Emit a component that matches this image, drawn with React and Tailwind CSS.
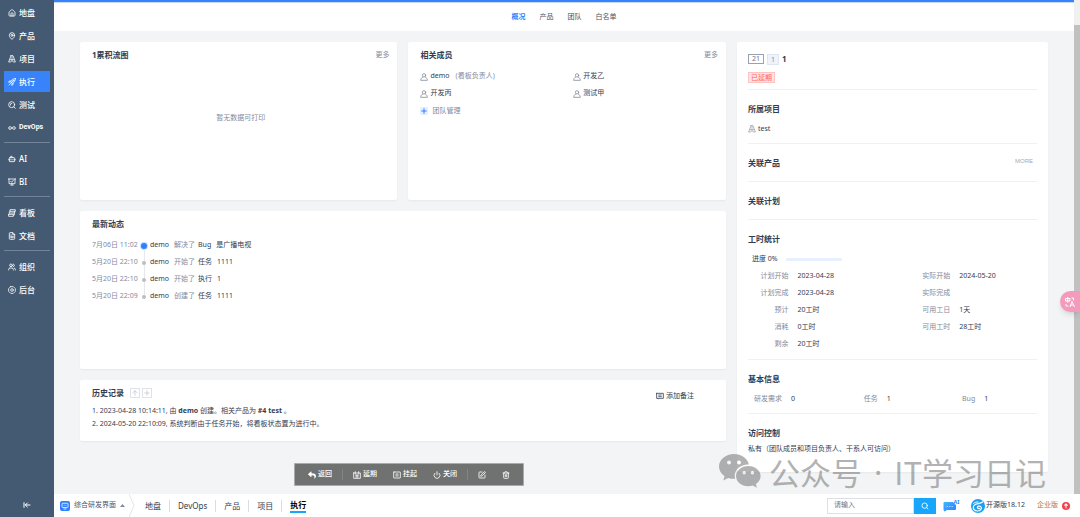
import React from 'react'
import {
    House,
    MapPin,
    Infinity as InfinityIcon,
    Bot,
    FileText,
    Users,
    ArrowLeftToLine,
    Plus,
    ArrowUp,
    Power,
    SquarePen,
    Trash2,
    Search
} from 'lucide-react'
import { FaReply } from 'react-icons/fa'

// Shared wrapper for the small line icons
const LineIcon = ({ className = '', children }) => (
    <svg
        viewBox="0 0 24 24"
        fill="none"
        stroke="currentColor"
        strokeWidth="2.4"
        strokeLinecap="round"
        strokeLinejoin="round"
        className={className}
        aria-hidden="true"
    >
        {children}
    </svg>
)

const ProjectIcon = ({ className }) => (
    <LineIcon className={className}>
        <path d="M9 2h6l7 19h-6l-4-5-4 5H2L9 2z" />
        <path d="M12 5v3M12 11v2M6 14h12" />
    </LineIcon>
)

const RocketIcon = ({ className }) => (
    <LineIcon className={className}>
        <path d="M22 2c-7 0-11 3-14 9l5 5c6-3 9-7 9-14zM14 10L3 21M9 9L4 9l-2 4 5-1M15 15v5l-4 2 1-5" />
        <circle cx="16" cy="8" r="1.500" />
    </LineIcon>
)

const TestIcon = ({ className }) => (
    <LineIcon className={className}>
        <circle cx="11" cy="11" r="9" />
        <path d="M18 18l4 4M7 12a4 4 0 0 1 4-5" />
    </LineIcon>
)

const BiIcon = ({ className }) => (
    <LineIcon className={className}>
        <path d="M1 3h22M3 3v14h18V3M8 21h8M12 17v4M8 10l3 3 5-6" />
    </LineIcon>
)

const BoardIcon = ({ className }) => (
    <LineIcon className={className}>
        <path d="M6 7V2h16v5H6zM4 12h16V7M4 12v-2M2 16h14v6H2v-6zM16 18h3v-6" />
    </LineIcon>
)

const GearIcon = ({ className }) => (
    <LineIcon className={className}>
        <path d="M8 2h8l6 6v8l-6 6H8l-6-6V8l6-6z" />
        <circle cx="12" cy="12" r="4" />
    </LineIcon>
)

const PersonIcon = ({ className }) => (
    <LineIcon className={className}>
        <circle cx="12" cy="7" r="5" />
        <path d="M8 12c-3 2-6 5-6 10h20c0-5-3-8-6-10" />
    </LineIcon>
)

const DelayIcon = ({ className }) => (
    <LineIcon className={className}>
        <path d="M2 6h20v16H2V6zM7 2v7M17 2v7M8 13h8M12 11v7M8 18h8" />
    </LineIcon>
)

const PauseBoxIcon = ({ className }) => (
    <LineIcon className={className}>
        <rect x="2" y="3" width="20" height="18" rx="1" />
        <path d="M9.500 8v8M14.500 8v8" />
    </LineIcon>
)

const NoteIcon = ({ className }) => (
    <LineIcon className={className}>
        <path d="M2 4h20v15H9l-3 2v-2H2V4zM8 9h8M8 14h8" />
    </LineIcon>
)

const WechatIcon = ({ className = '' }) => (
    <svg viewBox="0 0 42 35" fill="currentColor" className={className} aria-hidden="true">
        <path
            fillRule="evenodd"
            d="M15 0C6.700 0 0 5.600 0 12.500c0 3.900 2.200 7.400 5.600 9.700L4.200 26.500l5-2.600c1.800.6 3.700.9 5.800.9h1.200a10 10 0 0 1-.5-3c0-6.300 6-11.300 13.200-11.300h1C28.600 4.400 22.400 0 15 0zM10 6.400a2 2 0 1 1 0 4 2 2 0 0 1 0-4zm10 0a2 2 0 1 1 0 4 2 2 0 0 1 0-4z"
        />
        <path
            fillRule="evenodd"
            d="M29.300 12C22.500 12 17 16.500 17 22s5.500 10.200 12.300 10.200c1.600 0 3.100-.2 4.500-.7l4.200 2.300-1.200-3.700c2.900-1.900 4.800-4.800 4.800-8.100C41.600 16.500 36.100 12 29.300 12zM25.200 17a1.700 1.700 0 1 1 0 3.400 1.700 1.700 0 0 1 0-3.400zm8.200 0a1.700 1.700 0 1 1 0 3.400 1.700 1.700 0 0 1 0-3.400z"
        />
    </svg>
)

const menuGroups = [
    [
        { label: '地盘', icon: House },
        { label: '产品', icon: MapPin },
        { label: '项目', icon: ProjectIcon },
        { label: '执行', icon: RocketIcon, active: true },
        { label: '测试', icon: TestIcon },
        { label: 'DevOps', icon: InfinityIcon, narrow: true }
    ],
    [
        { label: 'AI', icon: Bot },
        { label: 'BI', icon: BiIcon }
    ],
    [
        { label: '看板', icon: BoardIcon },
        { label: '文档', icon: FileText }
    ],
    [
        { label: '组织', icon: Users },
        { label: '后台', icon: GearIcon }
    ]
]

const members = [
    { name: 'demo', role: '(看板负责人)' },
    { name: '开发乙' },
    { name: '开发丙' },
    { name: '测试甲' }
]

const activities = [
    { time: '7月06日 11:02', user: 'demo', action: '解决了', type: 'Bug', target: '是广播电视', latest: true },
    { time: '5月20日 22:10', user: 'demo', action: '开始了', type: '任务', target: '1111' },
    { time: '5月20日 22:10', user: 'demo', action: '开始了', type: '执行', target: '1' },
    { time: '5月20日 22:09', user: 'demo', action: '创建了', type: '任务', target: '1111' }
]

const hours = [
    ['计划开始', '2023-04-28', '实际开始', '2024-05-20'],
    ['计划完成', '2023-04-28', '实际完成', ''],
    ['预计', '20工时', '可用工日', '1天'],
    ['消耗', '0工时', '可用工时', '28工时'],
    ['剩余', '20工时', '', '']
]

const basics = [
    ['研发需求', '0'],
    ['任务', '1'],
    ['Bug', '1']
]

function Sidebar() {
    return (
        <aside className="flex w-[54px] shrink-0 flex-col bg-[#445a72] px-1 pt-0.5 text-white">
            <nav className="flex-1">
                {menuGroups.map((group, idx) => (
                    <ul
                        key={idx}
                        className={`flex flex-col gap-0.5 ${idx > 0 ? 'mt-1 border-t border-[#71849a] pt-[5px]' : ''}`}
                    >
                        {group.map(({ label, icon: Icon, active, narrow }) => (
                            <li key={label}>
                                <a
                                    href="#"
                                    className={`flex h-[21px] items-center gap-[3px] pl-1 whitespace-nowrap ${active ? 'bg-[#3883fa]' : ''}`}
                                >
                                    <Icon className="size-2 shrink-0" strokeWidth={2.5} />
                                    <span className={narrow ? 'font-[Roboto] text-[7px] font-bold' : 'text-[8px] font-medium'}>
                                        {label}
                                    </span>
                                </a>
                            </li>
                        ))}
                    </ul>
                ))}
            </nav>
            <button type="button" aria-label="收起" className="mb-2 self-center">
                <ArrowLeftToLine className="size-2" strokeWidth={3} />
            </button>
        </aside>
    )
}

function TopNav() {
    return (
        <header className="border-t-2 border-[#3883fa] bg-white">
            <div className="flex h-[29px] items-center justify-center border-t border-[#c8dcfa] text-[7px] text-[#4a5468]">
                <nav className="flex gap-[14px]">
                    <a href="#" className="font-bold text-[#2e7fff]">概况</a>
                    <a href="#">产品</a>
                    <a href="#">团队</a>
                    <a href="#">白名单</a>
                </nav>
            </div>
        </header>
    )
}

const Card = ({ className = '', children }) => (
    <section className={`rounded-xs bg-white pt-[7px] shadow-xs ${className}`}>{children}</section>
)

const Title = ({ children }) => (
    <h2 className="text-[8px] leading-3 font-bold text-[#313c52]">{children}</h2>
)

const Block = ({ title, extra, className = '', children }) => (
    <div className={`border-b border-[#eef0f3] pt-[13px] ${className}`}>
        <div className="flex justify-between">
            <Title>{title}</Title>
            {extra}
        </div>
        {children}
    </div>
)

function FlowCard() {
    return (
        <Card className="flex min-h-[158px] flex-col pr-2 pl-3">
            <div className="flex justify-between">
                <Title>1累积流图</Title>
                <a href="#" className="leading-3 text-[#838a9d]">更多</a>
            </div>
            <p className="flex flex-1 items-center justify-center pb-6 text-[#838a9d]">暂无数据可打印</p>
        </Card>
    )
}

function MembersCard() {
    return (
        <Card className="min-h-[158px] pl-3">
            <div className="flex justify-between pr-2">
                <Title>相关成员</Title>
                <a href="#" className="leading-3 text-[#838a9d]">更多</a>
            </div>
            <ul className="mt-[7px] grid grid-cols-2">
                {members.map((m) => (
                    <li key={m.name} className="flex h-[17px] items-center gap-0.5">
                        <PersonIcon className="size-2 text-[#838a9d]" />
                        <span>{m.name}</span>
                        {m.role && <span className="ml-1 text-[#838a9d]">{m.role}</span>}
                    </li>
                ))}
            </ul>
            <a href="#" className="flex h-[18px] items-center gap-1 text-[#838a9d]">
                <Plus className="size-2 bg-[#e6f0ff] text-[#2e7fff]" strokeWidth={3} />
                团队管理
            </a>
        </Card>
    )
}

function ActivityCard() {
    return (
        <Card className="min-h-[158px] px-3">
            <Title>最新动态</Title>
            <ul className="mt-[7px]">
                {activities.map((a, idx) => (
                    <li key={idx} className="flex h-[17px] items-center">
                        <time className="w-12 shrink-0 text-[#838a9d]">{a.time}</time>
                        <span className="flex h-full w-2 shrink-0 flex-col items-center">
                            <span className={`w-px flex-1 ${idx > 0 ? 'bg-[#e6e8ec]' : ''}`} />
                            <span
                                className={`rounded-full ${a.latest ? 'size-1.5 bg-[#2e7fff] ring-1 ring-[#c4dbff]' : 'size-1 bg-[#bdbdbd]'}`}
                            />
                            <span className={`w-px flex-1 ${idx < activities.length - 1 ? 'bg-[#e6e8ec]' : ''}`} />
                        </span>
                        <span className="ml-0.5">{a.user}</span>
                        <span className="ml-[5px] text-[#838a9d]">{a.action}</span>
                        <span className="ml-[3px]">{a.type}</span>
                        <a href="#" className="ml-[5px]">{a.target}</a>
                    </li>
                ))}
            </ul>
        </Card>
    )
}

function HistoryCard() {
    return (
        <Card className="flex items-start justify-between pr-8 pb-[11px] pl-3">
            <div>
                <div className="flex h-3 items-center gap-1.5">
                    <Title>历史记录</Title>
                    <div className="flex gap-0.5 text-[#b9bfcc]">
                        <button type="button" aria-label="切换顺序" className="border border-[#dfe2e8]">
                            <ArrowUp className="size-2" />
                        </button>
                        <button type="button" aria-label="展开" className="border border-[#dfe2e8]">
                            <Plus className="size-2" />
                        </button>
                    </div>
                </div>
                <ol className="mt-[5px] leading-[13px]">
                    <li>1. 2023-04-28 10:14:11, 由 <strong>demo</strong> 创建。相关产品为 <strong>#4 test</strong> 。</li>
                    <li>2. 2024-05-20 22:10:09, 系统判断由于任务开始，将看板状态置为进行中。</li>
                </ol>
            </div>
            <button type="button" className="mt-[3px] flex items-center gap-0.5 leading-3">
                <NoteIcon className="size-2" />
                添加备注
            </button>
        </Card>
    )
}

function Toolbar() {
    return (
        <div className="mt-[11px] flex justify-center pl-3">
            <div className="flex h-[23px] items-center rounded-xs bg-[#6f7270] px-[14px] text-[7px] font-medium text-white ring-1 ring-[#a9abaa] ring-inset">
                <button type="button" className="flex items-center gap-0.5">
                    <FaReply className="size-2" />返回
                </button>
                <span className="mx-[10px] h-[11px] w-px bg-[#828583]" />
                <div className="flex gap-4">
                    <button type="button" className="flex items-center gap-0.5">
                        <DelayIcon className="size-2" />延期
                    </button>
                    <button type="button" className="flex items-center gap-0.5">
                        <PauseBoxIcon className="size-2" />挂起
                    </button>
                    <button type="button" className="flex items-center gap-0.5">
                        <Power className="size-2" strokeWidth={2.5} />关闭
                    </button>
                </div>
                <span className="mx-[10px] h-[11px] w-px bg-[#828583]" />
                <div className="flex gap-4">
                    <button type="button" aria-label="编辑"><SquarePen className="size-2" strokeWidth={2.5} /></button>
                    <button type="button" aria-label="删除"><Trash2 className="size-2" strokeWidth={2.5} /></button>
                </div>
            </div>
        </div>
    )
}

function DetailCard() {
    return (
        <section className="rounded-xs bg-white px-[11px] pt-[11px] pb-[17px] shadow-xs">
            <div className="border-b border-[#eef0f3] pb-1.5">
                <div className="flex h-3 items-center gap-[3px]">
                    <span className="border border-[#9aa1b0] px-[3px] leading-2 text-[#6b7488]">21</span>
                    <span className="border border-[#dfe5f2] bg-[#eff3fb] px-[3px] leading-[9px] text-[#838a9d]">1</span>
                    <h1 className="text-[8px] font-bold text-[#313c52]">1</h1>
                </div>
                <div className="mt-[7px] flex">
                    <span className="border border-[#ffc2c2] bg-[#ffe3e3] px-[2px] leading-[9px] text-[#ff5f5f]">已延期</span>
                </div>
            </div>

            <Block title="所属项目" className="pb-2">
                <a href="#" className="mt-2 flex h-3 items-center gap-0.5">
                    <ProjectIcon className="size-2 text-[#9aa1b0]" />
                    test
                </a>
            </Block>

            <Block
                title="关联产品"
                extra={<a href="#" className="mr-1 font-['Liberation_Sans'] text-[6px] leading-2 text-[#a3a9b8]">MORE</a>}
                className="pb-3"
            />
            <Block title="关联计划" className="pb-3" />

            <Block title="工时统计" className="pb-1.5">
                <div className="mt-2 flex h-3 items-center gap-2 pl-1">
                    <span>进度 0%</span>
                    <span className="h-[3px] w-14 rounded-full bg-[#e6f0ff]" />
                </div>
                <table className="mt-[3px] w-full table-fixed">
                    <tbody>
                        {hours.map(([l1, v1, l2, v2]) => (
                            <tr key={l1} className="h-[17px]">
                                <th className="w-[14%] text-right font-normal text-[#838a9d]">{l1}</th>
                                <td className="pl-[9px]">{v1}</td>
                                <th className="w-[14%] text-right font-normal text-[#838a9d]">{l2}</th>
                                <td className="w-[30%] pl-[9px]">{v2}</td>
                            </tr>
                        ))}
                    </tbody>
                </table>
            </Block>

            <Block title="基本信息" className="pb-2">
                <dl className="mt-2 grid h-3 grid-cols-[38fr_34fr_28fr] items-center">
                    {basics.map(([label, value]) => (
                        <div key={label} className="flex gap-[9px] pl-1.5">
                            <dt className="text-[#838a9d]">{label}</dt>
                            <dd>{value}</dd>
                        </div>
                    ))}
                </dl>
            </Block>

            <div className="pt-[13px]">
                <Title>访问控制</Title>
                <p className="mt-1 leading-3">私有（团队成员和项目负责人、干系人可访问）</p>
            </div>
        </section>
    )
}

function Footer() {
    return (
        <footer className="flex h-[23px] items-center bg-white text-[8px] text-[#313c52]">
            <button type="button" className="flex items-center gap-1 pl-1.5 text-[7px] text-[#4a5468]">
                <svg viewBox="0 0 20 20" className="size-[10px]" aria-hidden="true">
                    <rect width="20" height="20" rx="4" fill="#2e7fff" />
                    <rect x="4" y="4.500" width="12" height="8.500" rx="1.500" fill="none" stroke="#fff" strokeWidth="1.600" />
                    <path d="M7 16h6M7.500 8.700h1.500M11 8.700h1.500" stroke="#fff" strokeWidth="1.600" />
                </svg>
                综合研发界面
                <svg viewBox="0 0 10 6" className="h-[3px] w-[5px]" fill="#838a9d" aria-hidden="true">
                    <path d="M5 0l5 6H0z" />
                </svg>
            </button>
            <svg viewBox="0 0 6 23" className="ml-1 h-[23px] w-1.5" fill="none" stroke="#e3e6eb" aria-hidden="true">
                <path d="M0 0l5 11.500L0 23" />
            </svg>
            <nav className="flex items-center divide-x divide-[#d9dce2] pl-0.5 leading-3">
                <a href="#" className="px-2">地盘</a>
                <a href="#" className="px-2">DevOps</a>
                <a href="#" className="px-2">产品</a>
                <a href="#" className="px-2">项目</a>
                <a href="#" className="px-2 font-bold text-black">
                    <span className="block border-b-2 border-[#18a6fd]">执行</span>
                </a>
            </nav>

            <div className="ml-auto flex items-center pr-[10px]">
                <form className="flex h-4">
                    <input
                        type="text"
                        aria-label="搜索"
                        placeholder="请输入"
                        className="w-[87px] border border-[#dcdfe5] px-1.5 text-[7px] placeholder:text-[#6b7488]"
                    />
                    <button type="button" aria-label="搜索" className="flex w-[22px] items-center justify-center bg-[#18a6fd] text-white">
                        <Search className="size-2" strokeWidth={2.5} />
                    </button>
                </form>
                <a href="#" aria-label="AI" className="ml-[7px]">
                    <svg viewBox="0 0 34 26" className="h-[13px] w-[17px]" aria-hidden="true">
                        <defs>
                            <linearGradient id="chatFill" x1="0" y1="0" x2="1" y2="1">
                                <stop offset="0%" stopColor="#3fb6ff" />
                                <stop offset="100%" stopColor="#2e7fff" />
                            </linearGradient>
                        </defs>
                        <path d="M3 6h17l4 5h2v9a2 2 0 0 1-2 2H8l-5 3-2-3V8a2 2 0 0 1 2-2z" fill="url(#chatFill)" />
                        <path d="M7 15h3M12 15h3M17 15h3" stroke="#bfe0ff" strokeWidth="1.500" />
                        <text x="21" y="9" fontSize="11" fontWeight="bold" fill="#2e7fff">AI</text>
                    </svg>
                </a>
                <a href="#" className="ml-[11px] flex items-center gap-px text-[7px]">
                    <svg viewBox="0 0 28 28" className="size-[14px]" fill="none" stroke="#fff" strokeLinecap="round" aria-hidden="true">
                        <circle cx="14" cy="14" r="14" fill="#18a0f5" stroke="none" />
                        <path d="M23 6c-5 5-13 1-17 7s1 11 7 11 9-5 7-8-8-2-7 1 4 2 4 2" strokeWidth="2.400" />
                        <path d="M5 9c3-3 6-3 9-3" strokeWidth="2" />
                    </svg>
                    开源版18.12
                </a>
                <a href="#" className="ml-3 flex items-center gap-1 text-[7px] text-[#b9733a]">
                    企业版
                    <svg viewBox="0 0 14 14" className="size-2" aria-hidden="true">
                        <circle cx="7" cy="7" r="7" fill="#f0404a" />
                        <path d="M7 11V4M4 6.500l3-3 3 3" fill="none" stroke="#fff" strokeWidth="1.800" />
                    </svg>
                </a>
            </div>
        </footer>
    )
}

export default function App() {
    return (
        <div className="relative flex min-h-screen bg-[#f3f4f6] font-['Noto_Sans','Noto_Sans_CJK_SC',sans-serif] text-[7px] text-[#313c52]">
            <Sidebar />
            <div className="flex min-w-0 flex-1 flex-col">
                <div className="flex flex-1">
                    <div className="min-w-0 flex-1">
                        <TopNav />
                        <main className="grid grid-cols-[27fr_13fr] items-start gap-[11px] px-[26px] pt-[11px]">
                            <div className="flex flex-col gap-[11px]">
                                <div className="grid grid-cols-2 gap-[11px]">
                                    <FlowCard />
                                    <MembersCard />
                                </div>
                                <ActivityCard />
                                <HistoryCard />
                                <Toolbar />
                            </div>
                            <DetailCard />
                        </main>
                    </div>
                    {/* Scroll track and thumb */}
                    <div className="flex w-1.5 shrink-0 flex-col bg-[#f1f1f1] pt-[25px]">
                        <div className="flex-1 bg-[#c1c1c1]" />
                    </div>
                </div>
                <Footer />
            </div>

            <div className="pointer-events-none absolute right-[34px] bottom-7 flex items-center gap-2 font-['Noto_Sans_CJK_SC',sans-serif] text-[31px] leading-8 whitespace-nowrap text-[#808080] opacity-60">
                <WechatIcon className="h-[35px] w-[42px]" />
                <div className="flex gap-3">
                    <span>公众号</span>
                    <span className="font-['Noto_Sans']">·</span>
                    <span>IT学习日记</span>
                </div>
            </div>

            <button
                type="button"
                aria-label="翻译"
                className="fixed top-[291px] right-0 flex h-[21px] w-5 items-center justify-center rounded-l-full bg-[#f49abd] text-white shadow-md"
            >
                <svg viewBox="0 0 24 24" className="size-3" fill="none" stroke="currentColor" strokeWidth="2" aria-hidden="true">
                    <path d="M3 5h9v5H3zM7.500 2v11M15 4h4v5M4 16v4h5M12 22l4-11 5 11M14 18h5" />
                </svg>
            </button>
        </div>
    )
}
